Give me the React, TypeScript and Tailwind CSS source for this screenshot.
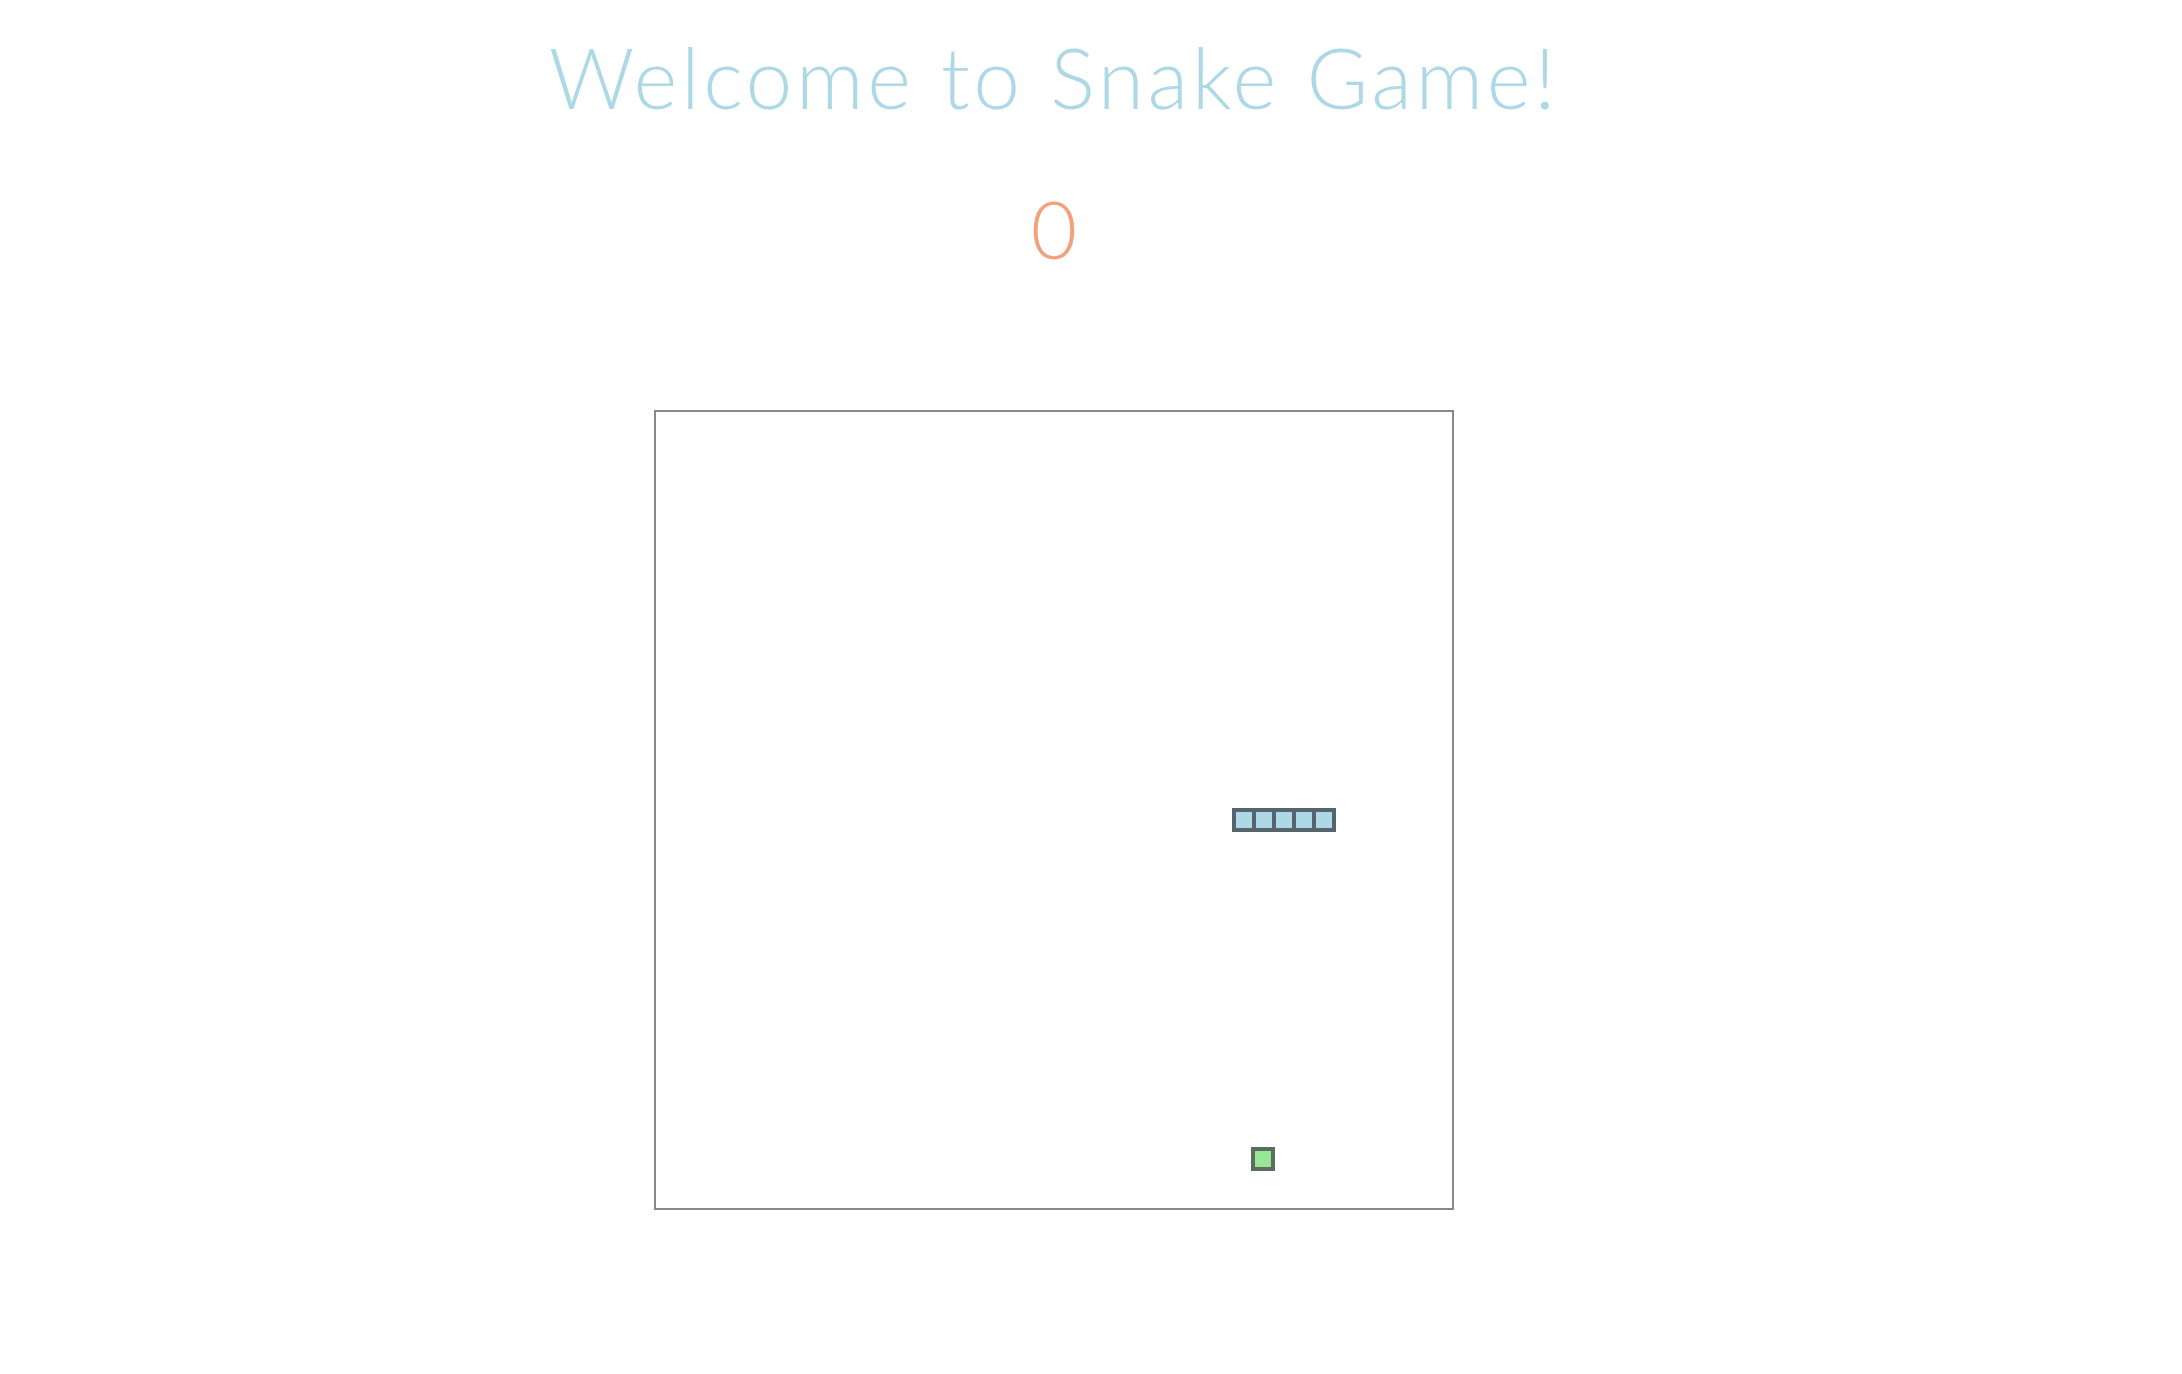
export default function App() {
  const snake = [0, 1, 2, 3, 4];

  return (
    <div className="w-[2108px] min-h-[1374px] bg-white flex flex-col items-center">
      <h1
        className="mt-[22px] text-[84px] leading-[110px] font-light text-[#add8e6] tracking-[3.6px]"
        style={{ fontFamily: "Lato, 'Open Sans', sans-serif" }}
      >
        Welcome to Snake Game!
      </h1>
      <p
        className="mt-[48px] text-[80px] leading-[96px] font-light text-[#f4a07c]"
        style={{ fontFamily: "Lato, 'Open Sans', sans-serif" }}
      >
        0
      </p>
      <div className="mt-[134px] w-[800px] h-[800px] border-2 border-[#888888] bg-white">
        <svg width="796" height="796" viewBox="0 0 796 796">
          {snake.map((i) => (
            <rect
              key={i}
              x={578 + i * 20}
              y={398}
              width={20}
              height={20}
              fill="#add8e6"
              stroke="#56646e"
              strokeWidth={4}
            />
          ))}
          <rect x={597} y={737} width={20} height={20} fill="#98e698" stroke="#5c6c5e" strokeWidth={4} />
        </svg>
      </div>
    </div>
  );
}
